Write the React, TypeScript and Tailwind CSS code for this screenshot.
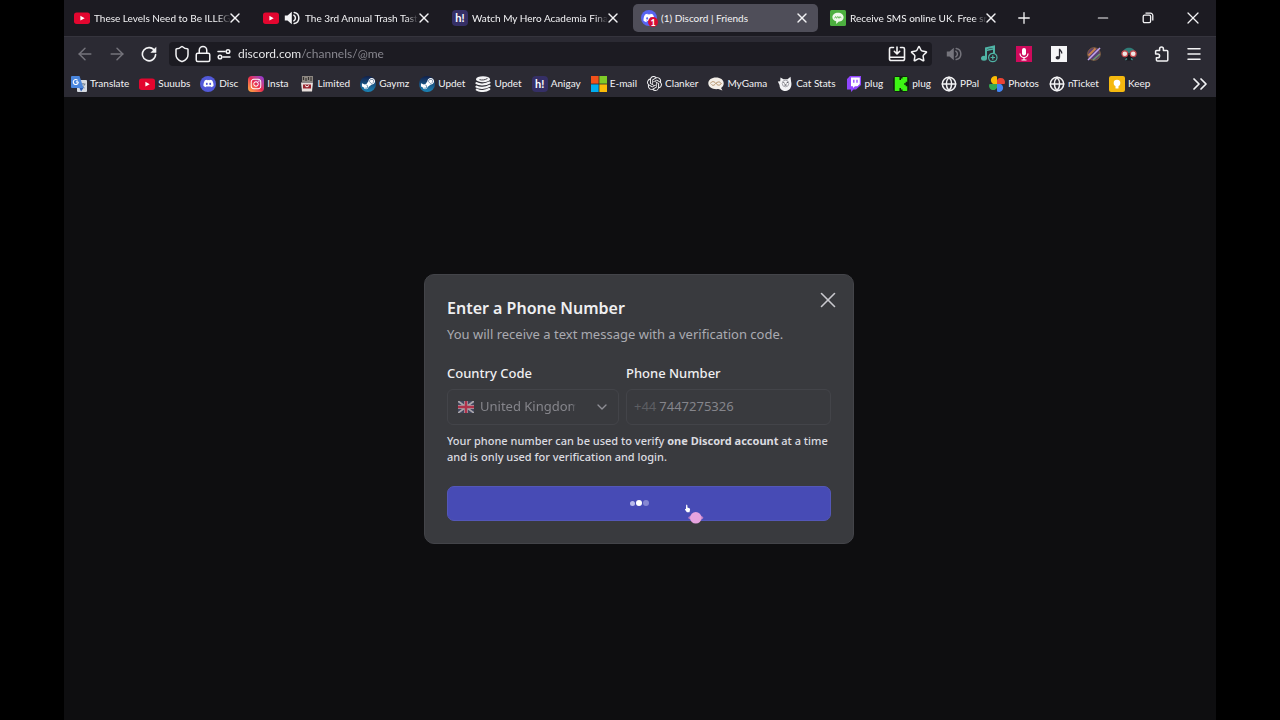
import type { ReactNode } from "react";
import {
  ArrowLeft,
  ArrowRight,
  ChevronDown,
  ChevronsRight,
  Globe,
  Lock,
  Menu,
  Minus,
  Plus,
  Shield,
  Star,
  X,
} from "lucide-react";
import { FaDiscord, FaInstagram, FaSteamSymbol } from "react-icons/fa";
import { SiKick, SiOpenai } from "react-icons/si";

const YouTubeIcon = () => (
  <svg viewBox="0 0 16 16" className="size-4 shrink-0" aria-hidden="true">
    <rect x="0" y="2.5" width="16" height="11.4" rx="2.6" fill="#e3062f" />
    <path d="M6.4 5.8v4.8l4.3-2.4z" fill="#fff" />
  </svg>
);

const HayaseIcon = () => (
  <span className="flex size-4 shrink-0 items-center justify-center rounded-sm bg-[#352f66] text-[11px] leading-4 font-bold text-white">
    h!
  </span>
);

const DiscordBadgeIcon = () => (
  <span className="relative flex size-4 shrink-0 items-center justify-center rounded-full bg-[#5865f2]">
    <FaDiscord className="size-3 text-white" />
    <span className="absolute top-[7px] left-[7px] flex size-[10px] items-center justify-center rounded-full bg-[#d80b33] text-[9px] leading-none font-bold text-white">
      1
    </span>
  </span>
);

const SmsIcon = () => (
  <svg viewBox="0 0 16 16" className="size-4 shrink-0" aria-hidden="true">
    <rect width="16" height="16" rx="1.5" fill="#4caf3f" />
    <path d="M8 2.800c3.200 0 5.600 1.900 5.600 4.400S11.200 11.600 8.800 11.600L6.200 14v-2.700C4 10.700 2.400 9.200 2.400 7.200 2.400 4.700 4.800 2.800 8 2.800z" fill="#eef8ea" />
    <path d="M4.600 8.300l1-1.800 1 1.800 1.200-1.900 1.200 1.900 1-1.800 1.200 1.600" stroke="#4caf3f" strokeWidth=".8" fill="none" />
  </svg>
);

const TranslateIcon = () => (
  <svg viewBox="0 0 16 16" className="size-4 shrink-0" aria-hidden="true">
    <rect x="6" y="4" width="10" height="12" rx="1" fill="#d6dbe2" />
    <path d="M9.500 8h5M12 7v1M13.600 8c-.4 2-1.900 3.400-3.600 4M10.600 9.500c.6 1.300 1.600 2 3 2.500" stroke="#6b7a8c" strokeWidth=".9" fill="none" />
    <path d="M1 0h7.500l4 12H1a1 1 0 0 1-1-1V1a1 1 0 0 1 1-1z" fill="#4a86dd" />
    <path d="M7.300 5.900H4.900M6.600 4.300A2.500 2.500 0 1 0 7.300 6" stroke="#fff" strokeWidth="1.100" fill="none" />
    <path d="M8.500 12h4L10 15.500z" fill="#2b5cb5" />
  </svg>
);

const LimitedIcon = () => (
  <svg viewBox="0 0 16 16" className="size-4 shrink-0" aria-hidden="true">
    <path d="M3 0h11v6H3z" fill="#8d8781" />
    <path d="M4.500 1v3M7 2v3M9.500 1v3M12 1v4" stroke="#34302f" strokeWidth="1.100" />
    <path d="M2 6.500h12l-1 9H3z" fill="#e8dfdc" />
    <path d="M4 8.500h8v4H4z" fill="#9b2630" />
    <path d="M6 9.500l2 1.500 2-1.500" stroke="#fff" fill="none" />
  </svg>
);

const SteamIcon = () => (
  <span className="flex size-4 shrink-0 items-center justify-center rounded-full bg-linear-to-b from-[#10204b] to-[#1a86b8]">
    <FaSteamSymbol className="size-[15px] text-white" />
  </span>
);

const StackIcon = () => (
  <svg viewBox="0 0 16 16" className="size-4 shrink-0" aria-hidden="true">
    <ellipse cx="8" cy="3.200" rx="7" ry="3" fill="#f3f3f5" />
    <path d="M4.500 3.600c2.500.8 5.500.4 8-1.200" stroke="#2b2a33" strokeWidth=".9" fill="none" />
    <path d="M1.500 7.200c2.500 1.800 9 1.800 13-.7M1.500 10.600c2.500 1.800 9 1.800 13-.7M1.800 13.600c3 2 8.500 1.900 12.500-.6" stroke="#f3f3f5" strokeWidth="2.100" fill="none" strokeLinecap="round" />
  </svg>
);

const MicrosoftIcon = () => (
  <svg viewBox="0 0 16 16" className="size-4 shrink-0" aria-hidden="true">
    <path d="M0 0h7.600v7.600H0z" fill="#f1511b" />
    <path d="M8.400 0H16v7.600H8.400z" fill="#80cc28" />
    <path d="M0 8.400h7.600V16H0z" fill="#00adef" />
    <path d="M8.400 8.400H16V16H8.400z" fill="#fbbc09" />
  </svg>
);

const MyGamaIcon = () => (
  <svg viewBox="0 0 16 16" className="size-4 shrink-0" aria-hidden="true">
    <path d="M8 1.500c4.400 0 7.700 2.400 7.700 5.800 0 2-1 3.600-2.600 4.600l1.300 2.500-4-1.400c-5.400.8-10.100-1.700-10.100-5.700 0-3.400 3.300-5.800 7.700-5.800z" fill="#f4efe8" />
    <path d="M2.500 7.500c1-2.500 3.500-2.500 5.500 0s4.500 2 5.500-.5M3.500 8.500c2 1.800 3 .3 4.500-1.200s3.500-2 4.800-.3" stroke="#b59167" strokeWidth="1" fill="none" />
  </svg>
);

const CatIcon = () => (
  <svg viewBox="0 0 16 16" className="size-4 shrink-0" aria-hidden="true">
    <path d="M3.500 1.500l3 1.700h4L13.500.8l.6 4.800c1.300 4.600-1 9.400-5.600 9.400-3.900 0-6-2.600-6-6L.8 5.500l2.400-.3z" fill="#f3f3f5" />
    <circle cx="8.500" cy="7.500" r="3.300" fill="none" stroke="#8a8a92" strokeWidth=".7" />
    <path d="M6.500 6.500l1 .7M10.800 6.200l-1.200.8M7.500 9h2" stroke="#2b2a33" strokeWidth="1" />
  </svg>
);

const TwitchIcon = () => (
  <svg viewBox="0 0 16 16" className="size-4 shrink-0" aria-hidden="true">
    <path d="M4 0h11v9l-5 4.500H7.500L5 16v-2.500H1V3z" fill="#9146ff" />
    <path d="M5 1.500h8.800V8L11.500 10.200H9L7 12v-1.800H5z" fill="#fff" />
    <path d="M7.800 3.800v3M11 3.800v3" stroke="#9146ff" strokeWidth="1.300" />
  </svg>
);

const KickIcon = () => (
  <span className="flex size-4 shrink-0 items-center justify-center rounded-sm bg-[#10240f]">
    <SiKick className="size-[14px] text-[#3df514]" />
  </span>
);

const PhotosIcon = () => (
  <svg viewBox="0 0 16 16" className="size-4 shrink-0" aria-hidden="true">
    <path d="M8 8H4.200A3.800 3.800 0 0 1 8 .5z" fill="#fbbc04" />
    <path d="M8 8V4.200A3.800 3.800 0 0 1 15.500 8z" fill="#ea4335" />
    <path d="M8 8h3.800A3.800 3.800 0 0 1 8 15.500z" fill="#4285f4" />
    <path d="M8 8v3.800A3.800 3.800 0 0 1 .5 8z" fill="#34a853" />
  </svg>
);

const KeepIcon = () => (
  <svg viewBox="0 0 16 16" className="size-4 shrink-0" aria-hidden="true">
    <rect width="16" height="16" rx="2" fill="#f5b90f" />
    <circle cx="8" cy="7" r="3.300" fill="#fff" />
    <path d="M6.500 9.500h3v3h-3z" fill="#fff" />
  </svg>
);

const InstaIcon = () => (
  <span className="flex size-4 shrink-0 items-center justify-center rounded-[4px] bg-linear-to-tr from-[#fdb13b] via-[#e8274f] to-[#8a2be0]">
    <FaInstagram className="size-3 text-white" />
  </span>
);

const DiscordIcon = () => (
  <span className="flex size-4 shrink-0 items-center justify-center rounded-full bg-[#5259d8]">
    <FaDiscord className="size-[11px] text-white" />
  </span>
);

const SpeakerIcon = ({ className }: { className: string }) => (
  <svg viewBox="0 0 16 16" className={className} aria-hidden="true">
    <path d="M.8 5.500H3.500L7.800 1.800v12.400L3.500 10.500H.8z" fill="currentColor" />
    <path d="M9.800 5.200a3.200 3.200 0 0 1 0 5.600M10.200 2.400a5.700 5.700 0 0 1 0 11.200" stroke="currentColor" strokeWidth="1.500" fill="none" strokeLinecap="round" />
  </svg>
);

const ReloadIcon = () => (
  <svg viewBox="0 0 16 16" className="size-4" aria-hidden="true">
    <path d="M13.600 4.700A6.600 6.600 0 1 0 14.600 8.500" stroke="currentColor" strokeWidth="1.600" fill="none" strokeLinecap="round" />
    <path d="M15.300.8v5.400a.5.5 0 0 1-.5.5H9.400z" fill="currentColor" />
  </svg>
);

const PermissionsIcon = () => (
  <svg viewBox="0 0 16 16" className="size-4" fill="none" stroke="currentColor" strokeWidth="1.500" aria-hidden="true">
    <path d="M2 5.500h7M7 11h7" strokeLinecap="round" />
    <circle cx="12" cy="5.500" r="1.800" />
    <circle cx="4" cy="11" r="1.800" />
  </svg>
);

const InstallIcon = () => (
  <svg viewBox="0 0 18 18" className="size-[18px]" fill="none" stroke="currentColor" strokeWidth="1.600" strokeLinecap="round" strokeLinejoin="round" aria-hidden="true">
    <path d="M5.500 2.500H3A1.500 1.500 0 0 0 1.500 4v10A1.500 1.500 0 0 0 3 15.500h12a1.500 1.500 0 0 0 1.500-1.500V4A1.500 1.500 0 0 0 15 2.500h-2.500M1.500 12.200h15M9 2v6.500M6.300 6.300L9 9l2.700-2.700" />
  </svg>
);

const MusicAddIcon = () => (
  <svg viewBox="0 0 18 18" className="size-[18px]" aria-hidden="true">
    <path d="M6 13V3.200L14 1.500V8" stroke="#4fb3a5" strokeWidth="2" fill="none" />
    <path d="M6 5.500l8-1.700" stroke="#4fb3a5" strokeWidth="1.500" />
    <ellipse cx="4" cy="13.300" rx="3" ry="2.500" fill="#4fb3a5" />
    <circle cx="12.800" cy="12.500" r="4.200" fill="#2b2a33" stroke="#4fb3a5" strokeWidth="1.200" />
    <path d="M10.600 12.500H15M12.800 10.300v4.400" stroke="#4fb3a5" strokeWidth="1.200" />
  </svg>
);

const MicIcon = () => (
  <svg viewBox="0 0 16 16" className="size-4" aria-hidden="true">
    <rect width="16" height="16" fill="#cf0a5c" />
    <rect x="6" y="2" width="4" height="7.500" rx="2" fill="#fff" />
    <path d="M4 7.500a4 4 0 0 0 8 0M8 11.500V14M5.500 14h5" stroke="#fff" strokeWidth="1.200" fill="none" />
  </svg>
);

const NoteIcon = () => (
  <svg viewBox="0 0 16 16" className="size-4" aria-hidden="true">
    <rect width="16" height="16" fill="#f5f5f7" />
    <path d="M8.500 11.500V2.800c.3 1.700 2.600 2 2.300 4.700" stroke="#2b2a33" strokeWidth="1.300" fill="none" />
    <ellipse cx="6.800" cy="11.800" rx="2.200" ry="1.800" fill="#2b2a33" />
  </svg>
);

const PlanetIcon = () => (
  <svg viewBox="0 0 16 16" className="size-4" fill="none" aria-hidden="true">
    <circle cx="8" cy="8" r="6.300" fill="#5b3f72" stroke="#86603f" strokeWidth="1" />
    <path d="M2.500 9.500L9.500 2.500" stroke="#c9824a" strokeWidth="1.800" />
    <path d="M2 14L14 2" stroke="#c3a5ee" strokeWidth="1.600" />
    <path d="M7 14L13.800 8" stroke="#6b9c6b" strokeWidth="1.500" />
  </svg>
);

const GogglesIcon = () => (
  <svg viewBox="0 0 18 18" className="size-[18px]" aria-hidden="true">
    <path d="M3 8c0-7 12-7 12 0z" fill="#2f7d78" />
    <path d="M6 10h6v5.500H6z" fill="#17171c" />
    <circle cx="4.800" cy="8.800" r="2.900" fill="#f0e6e4" stroke="#c5484c" strokeWidth="1.200" />
    <circle cx="13.200" cy="8.800" r="2.900" fill="#f0e6e4" stroke="#c5484c" strokeWidth="1.200" />
    <path d="M5.500 15l1.500-1.500M12.500 15L11 13.500" stroke="#3d918a" strokeWidth="1.200" />
  </svg>
);

const PuzzleIcon = () => (
  <svg viewBox="0 0 16 16" className="size-4" fill="none" stroke="currentColor" strokeWidth="1.500" strokeLinejoin="round" aria-hidden="true">
    <path d="M5.600 4.500V3a1.900 1.900 0 0 1 3.800 0v1.500h3.400a1 1 0 0 1 1 1V14a1 1 0 0 1-1 1H3.400a1 1 0 0 1-1-1v-2.300h1.400a1.800 1.800 0 0 0 0-3.600H1.600V5.500a1 1 0 0 1 1-1z" />
  </svg>
);

const RestoreIcon = () => (
  <svg viewBox="0 0 12 12" className="size-3" fill="none" stroke="currentColor" strokeWidth="1.300" aria-hidden="true">
    <rect x="1.200" y="3.200" width="7.400" height="7.400" rx="1.300" />
    <path d="M3.500 1.200h5a2.300 2.300 0 0 1 2.300 2.300v5" />
  </svg>
);

const FlagIcon = () => (
  <svg viewBox="0 0 16 12" className="h-3 w-4 shrink-0" aria-hidden="true">
    <rect width="16" height="12" rx="1" fill="#41475f" />
    <path d="M0 0l16 12M16 0L0 12" stroke="#a9a5aa" strokeWidth="1.800" />
    <path d="M8 0v12M0 6h16" stroke="#a9a2a8" strokeWidth="3.800" />
    <path d="M8 0v12M0 6h16" stroke="#b0324a" strokeWidth="2.400" />
  </svg>
);

type TabInfo = { title: string; icon: ReactNode; audio?: boolean; active?: boolean };

const tabs: TabInfo[] = [
  { title: "These Levels Need to Be ILLEG", icon: <YouTubeIcon /> },
  { title: "The 3rd Annual Trash Tast", icon: <YouTubeIcon />, audio: true },
  { title: "Watch My Hero Academia Fina", icon: <HayaseIcon /> },
  { title: "(1) Discord | Friends", icon: <DiscordBadgeIcon />, active: true },
  { title: "Receive SMS online UK. Free sr", icon: <SmsIcon /> },
];

const bookmarks: { label: string; icon: ReactNode }[] = [
  { label: "Translate", icon: <TranslateIcon /> },
  { label: "Suuubs", icon: <YouTubeIcon /> },
  { label: "Disc", icon: <DiscordIcon /> },
  { label: "Insta", icon: <InstaIcon /> },
  { label: "Limited", icon: <LimitedIcon /> },
  { label: "Gaymz", icon: <SteamIcon /> },
  { label: "Updet", icon: <SteamIcon /> },
  { label: "Updet", icon: <StackIcon /> },
  { label: "Anigay", icon: <HayaseIcon /> },
  { label: "E-mail", icon: <MicrosoftIcon /> },
  { label: "Clanker", icon: <SiOpenai className="size-[15px] shrink-0" /> },
  { label: "MyGama", icon: <MyGamaIcon /> },
  { label: "Cat Stats", icon: <CatIcon /> },
  { label: "plug", icon: <TwitchIcon /> },
  { label: "plug", icon: <KickIcon /> },
  { label: "PPal", icon: <Globe className="size-4 shrink-0" strokeWidth={2.250} /> },
  { label: "Photos", icon: <PhotosIcon /> },
  { label: "nTicket", icon: <Globe className="size-4 shrink-0" strokeWidth={2.250} /> },
  { label: "Keep", icon: <KeepIcon /> },
];

const extensions: { label: string; icon: ReactNode }[] = [
  { label: "Volume", icon: <SpeakerIcon className="size-4 text-[#75747c]" /> },
  { label: "Add music", icon: <MusicAddIcon /> },
  { label: "Recorder", icon: <MicIcon /> },
  { label: "Notes", icon: <NoteIcon /> },
  { label: "Planet", icon: <PlanetIcon /> },
  { label: "Goggles", icon: <GogglesIcon /> },
];

function Tab({ title, icon, audio, active }: TabInfo) {
  return (
    <div
      className={
        "flex h-7 w-[185px] min-w-0 items-center rounded-[5px] pr-3 pl-2 " + (active ? "bg-[#4f4e59]" : "")
      }
    >
      <a href="#" className="flex min-w-0 flex-1 items-center gap-1">
        {icon}
        {audio && <SpeakerIcon className="mx-px size-4 shrink-0" />}
        <span
          className={
            "min-w-0 overflow-hidden whitespace-nowrap " + (active ? "" : "mask-r-from-90% mask-r-to-100%")
          }
        >
          {title}
        </span>
      </a>
      <button type="button" aria-label="Close tab" className="flex h-4 w-2 shrink-0 items-center justify-center">
        <X className="size-4 shrink-0" />
      </button>
    </div>
  );
}

function PhoneDialog() {
  return (
    <section
      role="dialog"
      aria-labelledby="dialog-title"
      className="relative w-[430px] rounded-[10px] border border-[#434449] bg-[#393a3e] px-[22px] pt-[21px] pb-[22px] font-[Noto_Sans,sans-serif] text-[#efeff1]"
    >
      <button type="button" aria-label="Close" className="absolute top-3 right-3 text-[#c9c9ce]">
        <X className="size-[26px]" strokeWidth={1.500} />
      </button>
      <h1 id="dialog-title" className="text-[16px] leading-6 font-semibold">
        Enter a Phone Number
      </h1>
      <p className="mt-1 text-[13px] leading-5 text-[#aaaab1]">
        You will receive a text message with a verification code.
      </p>
      <form className="mt-[19px]">
        <div className="flex gap-[7px]">
          <div className="w-[172px]">
            <label htmlFor="country" className="block text-[13px] leading-5 font-medium">
              Country Code
            </label>
            <div className="mt-1.5 flex h-9 items-center gap-[6px] rounded-md border border-[#434449] pr-2 pl-[10px]">
              <FlagIcon />
              <select
                id="country"
                className="min-w-0 flex-1 appearance-none bg-transparent mask-r-from-95% mask-r-to-100% text-[13px] text-[#85858b]"
              >
                <option>United Kingdom</option>
              </select>
              <ChevronDown className="ml-3 size-4 shrink-0 text-[#8f8f96]" />
            </div>
          </div>
          <div className="min-w-0 flex-1">
            <label htmlFor="phone" className="block text-[13px] leading-5 font-medium">
              Phone Number
            </label>
            <div className="mt-1.5 flex h-9 items-center gap-[3px] rounded-md border border-[#434449] px-[7px] text-[13px]">
              <span className="text-[#5d5e63]">+44</span>
              <input
                id="phone"
                type="tel"
                defaultValue="7447275326"
                className="min-w-0 flex-1 bg-transparent text-[#85858b] outline-none"
              />
            </div>
          </div>
        </div>
        <p className="mt-2 text-[11px] leading-4 font-medium text-[#dcdce0]">
          Your phone number can be used to verify <strong className="font-bold">one Discord account</strong> at a time
          and is only used for verification and login.
        </p>
        <button
          type="button"
          aria-label="Sending"
          className="relative mt-[21px] flex h-[35px] w-full items-center justify-center gap-px rounded-[7px] border border-[#5457b8] bg-[#474bb5]"
        >
          <span className="size-[5px] rounded-full bg-[#b9bbea]" />
          <span className="size-[6px] rounded-full bg-white" />
          <span className="size-[6px] rounded-full bg-[#8587d3]" />
          <svg viewBox="0 0 20 20" className="absolute top-[17px] left-[236px] size-5" aria-hidden="true">
            <path d="M2.200.8c.9-.2 1.200.4 1.200 1.200v1.600l2 .7c.7.3.8.8.6 1.600L5.500 8.300H2.900L1 5.700c-.2-.5.3-.8.900-.4z" fill="#fff" />
            <ellipse cx="11.800" cy="13.800" rx="7.600" ry="2.400" fill="#b77bc4" />
            <circle cx="11.800" cy="13.800" r="5.800" fill="#e6a3df" />
          </svg>
        </button>
      </form>
    </section>
  );
}

export default function App() {
  return (
    <div className="min-h-screen bg-black px-[5%] font-[Lato,Noto_Sans,sans-serif] text-[10px] text-[#f3f3f5]">
      <div className="flex min-h-screen flex-col bg-[#0e0e10]">
        <header className="bg-[#2b2a33]">
          <div className="flex h-9 items-center bg-[#1c1b22] pr-px">
            <nav aria-label="Tabs" className="flex min-w-0 gap-1 pl-0.5">
              {tabs.map((tab) => (
                <Tab key={tab.title} {...tab} />
              ))}
            </nav>
            <button type="button" aria-label="New tab" className="flex w-[34px] justify-center">
              <Plus className="size-[18px]" strokeWidth={1.750} />
            </button>
            <div className="ml-auto flex">
              <button type="button" aria-label="Minimize" className="flex w-[45px] items-center justify-center">
                <Minus className="size-4" strokeWidth={1.750} />
              </button>
              <button type="button" aria-label="Restore" className="flex w-[45px] items-center justify-center">
                <RestoreIcon />
              </button>
              <button type="button" aria-label="Close window" className="flex w-[45px] items-center justify-center">
                <X className="size-5" strokeWidth={1.500} />
              </button>
            </div>
          </div>

          <div className="flex h-[34px] items-center border-t border-[#35343d] pr-1.5 pl-[5px]">
            <button type="button" aria-label="Back" className="flex w-8 justify-center text-[#75747c]">
              <ArrowLeft className="size-5" strokeWidth={1.750} />
            </button>
            <button type="button" aria-label="Forward" className="flex w-8 justify-center text-[#75747c]">
              <ArrowRight className="size-5" strokeWidth={1.750} />
            </button>
            <button type="button" aria-label="Reload" className="flex w-8 justify-center">
              <ReloadIcon />
            </button>
            <div className="mx-1 flex h-6 min-w-0 flex-1 items-center rounded-[4px] bg-[#1c1b22] px-1">
              <Shield className="size-[18px]" />
              <Lock className="ml-[3px] size-[18px]" />
              <span className="ml-1">
                <PermissionsIcon />
              </span>
              <label htmlFor="address" className="sr-only">
                Address
              </label>
              <input
                id="address"
                type="text"
                defaultValue="discord.com/channels/@me"
                className="ml-[6px] min-w-0 flex-1 bg-linear-to-r from-[#f3f3f5] from-[63px] to-[#8d8c94] to-[63px] bg-clip-text text-[12px] text-transparent outline-none"
              />
              <button type="button" aria-label="Install">
                <InstallIcon />
              </button>
              <button type="button" aria-label="Bookmark page" className="ml-1">
                <Star className="size-[18px]" />
              </button>
            </div>
            {extensions.map((extension) => (
              <button
                key={extension.label}
                type="button"
                aria-label={extension.label}
                className="flex w-[35px] items-center justify-center"
              >
                {extension.icon}
              </button>
            ))}
            <button type="button" aria-label="Extensions" className="flex w-8 justify-center">
              <PuzzleIcon />
            </button>
            <button type="button" aria-label="Menu" className="flex w-8 justify-center">
              <Menu className="size-[18px]" />
            </button>
          </div>

          <nav aria-label="Bookmarks" className="flex h-[27px] items-center gap-[10px] pr-1 pl-[7px]">
            {bookmarks.map((bookmark, index) => (
              <a key={index} href="#" className="flex items-center gap-[3px] whitespace-nowrap">
                {bookmark.icon}
                {bookmark.label}
              </a>
            ))}
            <button type="button" aria-label="More bookmarks" className="ml-auto">
              <ChevronsRight className="size-6" strokeWidth={1.750} />
            </button>
          </nav>
        </header>

        <main className="flex flex-1 items-center justify-center pr-0.5">
          <PhoneDialog />
        </main>
      </div>
    </div>
  );
}
